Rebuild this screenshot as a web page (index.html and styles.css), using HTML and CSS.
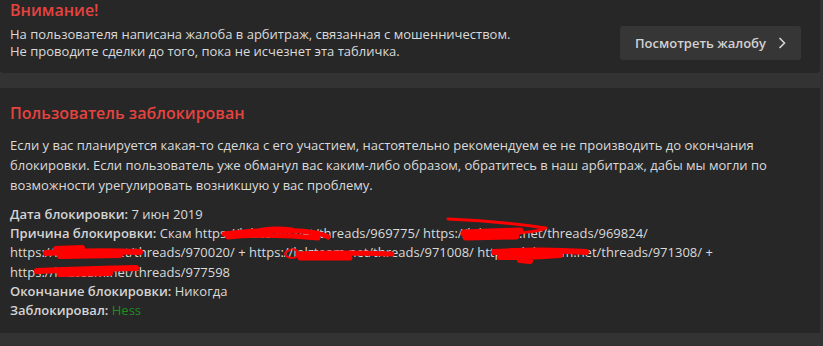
FILE: index.html
```html
<!DOCTYPE html>
<html lang="ru">
<head>
<meta charset="utf-8">
<link rel="stylesheet" href="styles.css">
</head>
<body>
<div class="page">
  <section class="notice">
    <h2 class="notice-title">Внимание!</h2>
    <div class="notice-row">
      <p class="notice-text">На пользователя написана жалоба в арбитраж, связанная с мошенничеством.<br>Не проводите сделки до того, пока не исчезнет эта табличка.</p>
      <a class="notice-button" href="#">Посмотреть жалобу <svg class="chev" width="8" height="12" viewBox="0 0 8 12"><path d="M1.5 1 L6.5 6 L1.5 11" fill="none" stroke="#d4d4d4" stroke-width="1.6"/></svg></a>
    </div>
  </section>
  <section class="banned">
    <h2 class="banned-title">Пользователь заблокирован</h2>
    <p class="banned-text">Если у вас планируется какая-то сделка с его участием, настоятельно рекомендуем ее не производить до окончания блокировки. Если пользователь уже обманул вас каким-либо образом, обратитесь в наш арбитраж, дабы мы могли по возможности урегулировать возникшую у вас проблему.</p>
    <div class="details">
      <div class="row"><b>Дата блокировки:</b> 7 июн 2019</div>
      <div class="row"><b>Причина блокировки:</b> Скам https://lolzteam.net/threads/969775/ https://lolzteam.net/threads/969824/ https://lolzteam.net/threads/970020/ + https://lolzteam.net/threads/971008/ https://lolzteam.net/threads/971308/ + https://lolzteam.net/threads/977598</div>
      <div class="row"><b>Окончание блокировки:</b> Никогда</div>
      <div class="row"><b>Заблокировал:</b> <span class="user">Hess</span></div>
    </div>
    <svg class="scribble" viewBox="0 88 820 246" width="820" height="246">
      <g fill="none" stroke="#ff0000" stroke-linecap="round" stroke-linejoin="round">
        <path stroke-width="5" d="M224 234 Q 262 229 300 231 Q 322 233 328 237 M228 237 Q 270 233 318 238"/>
        <path stroke-width="3" d="M252 232 Q 268 226 292 229"/>
        <path stroke-width="3" d="M448 219 Q 500 221 546 228 Q 535 233 505 233"/>
        <path stroke-width="7" d="M464 233 L 520 231 M466 237 L 516 236"/>
        <path stroke-width="6" d="M46 253 Q 90 250 140 252 M56 249 L 82 248 M60 256 L 120 255"/>
        <path stroke-width="5" d="M298 254 Q 340 252 392 254 M300 258 L 350 258"/>
        <path stroke-width="2" d="M290 250 Q 283 252 286 256 Q 292 260 298 256 Q 300 251 293 249"/>
        <path stroke-width="6" d="M494 252 Q 540 249 586 252 M500 257 Q 535 257 560 255 M520 260 L 530 261"/>
        <path stroke-width="6" d="M37 271 Q 90 269 136 268 M60 274 L 110 273"/>
      </g>
    </svg>
  </section>
</div>
</body>
</html>
```

FILE: styles.css
```css
html, body {
  margin: 0;
  padding: 0;
}
body {
  background: #333333;
  font-family: "Open Sans", "Liberation Sans", sans-serif;
  font-size: 13px;
  color: #dadada;
}
.page {
  width: 820px;
}
.notice {
  background: #272727;
  border-radius: 0 0 4px 4px;
  padding: 0 19px 13px 10px;
}
.notice-title {
  margin: 0;
  height: 26px;
  line-height: 20px;
  font-size: 16px;
  font-weight: 600;
  color: #e5433f;
}
.notice-row {
  display: flex;
  align-items: center;
  justify-content: space-between;
}
.notice-text {
  margin: 0;
  line-height: 17px;
}
.notice-button {
  display: flex;
  align-items: center;
  gap: 12px;
  height: 34px;
  padding: 0 15px;
  box-sizing: border-box;
  width: 181px;
  background: #363636;
  border-radius: 3px;
  color: #d2d2d2;
  font-weight: 600;
  text-decoration: none;
}
.chev {
  display: block;
}
.banned {
  position: relative;
  margin-top: 15px;
  background: #272727;
  padding: 14px 10px 13px 10px;
}
.banned-title {
  margin: 0;
  line-height: 22px;
  font-size: 16px;
  font-weight: 600;
  color: #e5433f;
}
.banned-text {
  margin: 11px 0 0;
  line-height: 20px;
}
.details {
  margin-top: 10px;
  line-height: 19.2px;
}
.details b {
  font-weight: 600;
  color: #d4d4d4;
}
.user {
  color: #1e8e1e;
}
.scribble {
  position: absolute;
  left: 0;
  top: 0;
  pointer-events: none;
}
```
